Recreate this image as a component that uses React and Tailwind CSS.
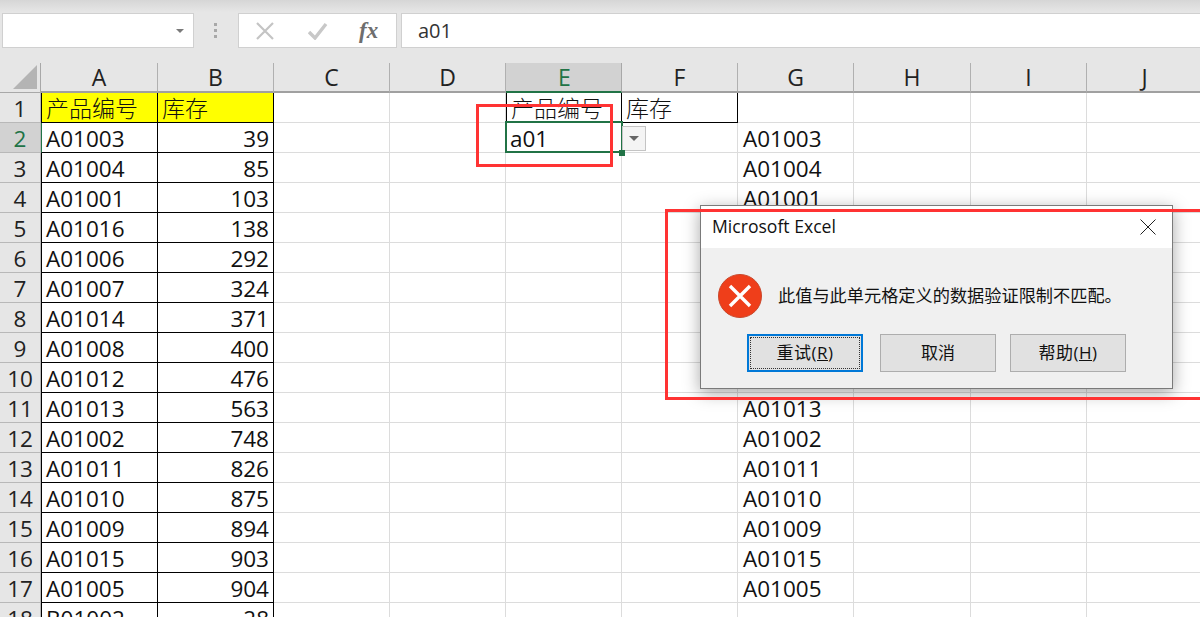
const FONT = "font-['Open_Sans','Noto_Sans_CJK_SC',sans-serif]";
const COLS = ['A', 'B', 'C', 'D', 'E', 'F', 'G', 'H', 'I', 'J'];
const DATA = [
  ['A01003', 39], ['A01004', 85], ['A01001', 103], ['A01016', 138], ['A01006', 292], ['A01007', 324],
  ['A01014', 371], ['A01008', 400], ['A01012', 476], ['A01013', 563], ['A01002', 748], ['A01011', 826],
  ['A01010', 875], ['A01009', 894], ['A01015', 903], ['A01005', 904], ['B01002', 28],
];

function Toolbar() {
  return (
    <div className="h-[63px] bg-[linear-gradient(#d6d6d6,#e6e6e6_12px)] flex items-start pt-[13px] pl-[2px]">
      <div className="w-[192px] h-[35px] bg-white border border-[#d0d0d0] flex items-center justify-end pr-[9px]">
        <div className="w-0 h-0 border-x-[4px] border-x-transparent border-t-[4px] border-t-[#7a7a7a]" />
      </div>
      <div className="w-[42px] h-[35px] flex flex-col items-center justify-center gap-[3px]">
        <span className="w-[3px] h-[3px] bg-[#a8a8a8]" />
        <span className="w-[3px] h-[3px] bg-[#a8a8a8]" />
        <span className="w-[3px] h-[3px] bg-[#a8a8a8]" />
      </div>
      <div className="w-[159px] h-[35px] ml-[2px] bg-white border border-[#d0d0d0] flex items-center">
        <svg width="18" height="18" viewBox="0 0 18 18" className="ml-[17px]">
          <path d="M1 1 L17 17 M17 1 L1 17" stroke="#c4c4c4" strokeWidth="2.2" />
        </svg>
        <svg width="20" height="18" viewBox="0 0 20 18" className="ml-[34px]">
          <path d="M1 10 L7 16 L18 2" stroke="#c8c8c8" strokeWidth="3.4" fill="none" />
        </svg>
        <span className="ml-[31px] font-['Liberation_Serif',serif] italic font-bold text-[23px] leading-none text-[#6e6e6e]">fx</span>
      </div>
      <div className="ml-[4px] flex-1 h-[35px] bg-white border-y border-l border-[#d0d0d0] flex items-center pl-[16px] text-[20px] text-[#333333] font-['Open_Sans',sans-serif]">
        a01
      </div>
    </div>
  );
}

function ColumnHeaders() {
  return (
    <div className="flex h-[30px] bg-[#e6e6e6] text-[23px] text-[#222222]">
      <div className="w-[41px] shrink-0 border-r border-b border-[#a8a8a8] flex items-end justify-end pr-[3px] pb-[3px]">
        <svg width="24" height="24" viewBox="0 0 24 24"><path d="M24 0 V24 H0 Z" fill="#b4b4b4" /></svg>
      </div>
      {COLS.map((c) => (
        <div
          key={c}
          className={
            (c === 'A' || c === 'H' ? 'w-[117px] ' : 'w-[116px] ') +
            'shrink-0 flex items-center justify-center border-r ' +
            (c === 'E'
              ? 'bg-[#d2d2d2] text-[#217346] border-[#a8a8a8] border-b-2 border-b-[#217346] pl-[2px]'
              : 'border-[#b0b0b0] border-b-2 border-b-[#a0a0a0]')
          }
        >
          {c}
        </div>
      ))}
    </div>
  );
}

function Row({ n, a, b, g, e, f }) {
  const selected = n === 2;
  const aClass =
    'w-[117px] border-l border-r border-b border-r-black border-b-black pl-[4px] ' +
    (selected ? 'border-l-[#217346] ' : 'border-l-black ') +
    (n === 1 ? 'bg-[#ffff00]' : 'bg-white');
  const bClass =
    'w-[116px] border-r border-b border-black ' + (n === 1 ? 'bg-[#ffff00] pl-[4px]' : 'bg-white text-right pr-[4px]');
  const plain = 'w-[116px] border-r border-b border-[#dcdcdc] bg-white pl-[4px]';
  const outlined = 'w-[116px] border-r border-b border-black bg-white pl-[4px]';
  return (
    <div className="flex h-[30px] leading-[31px] text-[22.5px] text-[#111111]">
      <div
        className={
          'w-[41px] shrink-0 text-center border-r border-b border-[#b8b8b8] ' +
          (selected ? 'bg-[#d2d2d2] text-[#217346]' : 'bg-[#e6e6e6] text-[#222222]')
        }
      >
        {n}
      </div>
      <div className={aClass + ' shrink-0 overflow-hidden'}>{a}</div>
      <div className={bClass + ' shrink-0 overflow-hidden'}>{b}</div>
      <div className={plain + ' shrink-0'} />
      <div className={plain + ' shrink-0'} />
      <div className={(n === 1 ? outlined + ' border-l' : plain) + ' shrink-0 overflow-hidden'}>{e}</div>
      <div className={(n === 1 ? outlined : plain) + ' shrink-0 overflow-hidden'}>{f}</div>
      <div className={plain + ' shrink-0 pl-[5px]'}>{g}</div>
      <div className={plain + ' shrink-0 w-[117px]'} />
      <div className={plain + ' shrink-0'} />
      <div className={plain + ' shrink-0'} />
    </div>
  );
}

function DialogButton({ children, primary }) {
  return (
    <button
      className={
        'w-[116px] h-[38px] text-[17px] text-[#111111] flex items-center justify-center bg-[#e1e1e1] ' +
        (primary
          ? 'border-2 border-[#0078d7] outline-1 outline-dotted -outline-offset-4 outline-[#333333]'
          : 'border border-[#adadad]')
      }
    >
      {children}
    </button>
  );
}

function Dialog() {
  return (
    <div className="absolute left-[700px] top-[205px] w-[473px] h-[184px] bg-[#f0f0f0] border border-[#7a7a7a] shadow-[0_4px_16px_rgba(0,0,0,0.35)] flex flex-col z-10">
      <div className="h-[42px] bg-white flex items-center justify-between pl-[11px] pr-[16px]">
        <span className="text-[17.6px] text-[#111111] font-['Open_Sans',sans-serif] -translate-y-px">Microsoft Excel</span>
        <svg width="16" height="16" viewBox="0 0 16 16">
          <path d="M0.5 0.5 L15.5 15.5 M15.5 0.5 L0.5 15.5" stroke="#222222" strokeWidth="1" />
        </svg>
      </div>
      <div className="flex items-center pl-[17px] mt-[26px]">
        <svg width="44" height="44" viewBox="0 0 44 44">
          <circle cx="22" cy="22" r="21.5" fill="#ef3e1a" stroke="#c9482c" strokeWidth="1" />
          <path d="M12 12 L32 32 M32 12 L12 32" stroke="#ffffff" strokeWidth="3.4" />
        </svg>
        <span className="ml-[16px] text-[17.2px] leading-none text-[#111111]">此值与此单元格定义的数据验证限制不匹配。</span>
      </div>
      <div className="flex mt-[16px] pl-[46px]">
        <DialogButton primary>
          <span className="tracking-[0.5px]">重试(<span className="underline">R</span>)</span>
        </DialogButton>
        <div className="w-[17px]" />
        <DialogButton>取消</DialogButton>
        <div className="w-[14px]" />
        <DialogButton>
          <span className="tracking-[0.5px]">帮助(<span className="underline">H</span>)</span>
        </DialogButton>
      </div>
    </div>
  );
}

const Cjk = ({ children }) => <span className="font-light text-[23px] leading-[29px]">{children}</span>;

export default function App() {
  return (
    <div className={'relative w-[1200px] h-[617px] overflow-hidden bg-white ' + FONT}>
      <Toolbar />
      <ColumnHeaders />
      <Row n={1} a={<Cjk>产品编号</Cjk>} b={<Cjk>库存</Cjk>} e={<Cjk>产品编号</Cjk>} f={<Cjk>库存</Cjk>} />
      {DATA.map((d, i) => (
        <Row
          key={d[0]}
          n={i + 2}
          a={d[0]}
          b={d[1]}
          g={i < 16 ? d[0] : ''}
          e={i === 0 ? 'a01' : ''}
        />
      ))}

      {/* selection box on E2 */}
      <div className="absolute left-[505px] top-[121px] w-[118px] h-[32px] border-2 border-[#217346]" />
      {/* in-cell dropdown */}
      <div className="absolute left-[622px] top-[126px] w-[24px] h-[25px] bg-[#f4f4f4] border border-[#c4c4c4] flex items-center justify-center">
        <div className="w-0 h-0 border-x-[5px] border-x-transparent border-t-[5px] border-t-[#666666]" />
      </div>
      <div className="absolute left-[619px] top-[150px] w-[6px] h-[6px] bg-[#217346]" />

      <Dialog />

      {/* red annotation rectangles */}
      <div className="absolute left-[476px] top-[104px] w-[137px] h-[63px] border-[3px] border-[#ff3333] z-20" />
      <div className="absolute left-[665px] top-[209px] w-[540px] h-[191px] border-[3px] border-[#ff3333] z-20" />
    </div>
  );
}
